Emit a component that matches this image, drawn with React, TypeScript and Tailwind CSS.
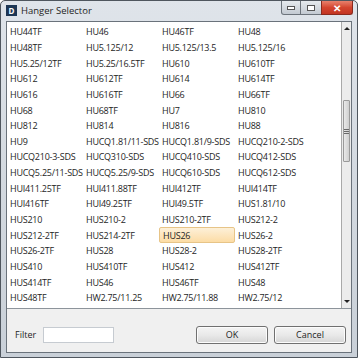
const hangers: string[] = [
  "HU44TF", "HU46", "HU46TF", "HU48",
  "HU48TF", "HU5.125/12", "HU5.125/13.5", "HU5.125/16",
  "HU5.25/12TF", "HU5.25/16.5TF", "HU610", "HU610TF",
  "HU612", "HU612TF", "HU614", "HU614TF",
  "HU616", "HU616TF", "HU66", "HU66TF",
  "HU68", "HU68TF", "HU7", "HU810",
  "HU812", "HU814", "HU816", "HU88",
  "HU9", "HUCQ1.81/11-SDS", "HUCQ1.81/9-SDS", "HUCQ210-2-SDS",
  "HUCQ210-3-SDS", "HUCQ310-SDS", "HUCQ410-SDS", "HUCQ412-SDS",
  "HUCQ5.25/11-SDS", "HUCQ5.25/9-SDS", "HUCQ610-SDS", "HUCQ612-SDS",
  "HUI411.25TF", "HUI411.88TF", "HUI412TF", "HUI414TF",
  "HUI416TF", "HUI49.25TF", "HUI49.5TF", "HUS1.81/10",
  "HUS210", "HUS210-2", "HUS210-2TF", "HUS212-2",
  "HUS212-2TF", "HUS214-2TF", "HUS26", "HUS26-2",
  "HUS26-2TF", "HUS28", "HUS28-2", "HUS28-2TF",
  "HUS410", "HUS410TF", "HUS412", "HUS412TF",
  "HUS414TF", "HUS46", "HUS46TF", "HUS48",
  "HUS48TF", "HW2.75/11.25", "HW2.75/11.88", "HW2.75/12",
];

const selected = "HUS26";

const Scrollbar = () => (
  <div className="w-[10px] flex flex-col border-l border-[#a9a9a9] bg-[#ececec]">
    <div className="h-[13px] flex items-center justify-center">
      <div className="w-0 h-0 border-x-[3px] border-x-transparent border-b-[3px] border-b-[#222]" />
    </div>
    <div className="h-[65px]" />
    <div className="h-[62px] mx-[1px] rounded-[1px] border border-[#9a9a9a] bg-gradient-to-r from-[#e9e9e9] to-[#cfcfcf] flex flex-col items-center justify-center gap-[1px]">
      <div className="w-[5px] h-px bg-[#6a6a6a]" />
      <div className="w-[5px] h-px bg-[#6a6a6a]" />
      <div className="w-[5px] h-px bg-[#6a6a6a]" />
    </div>
    <div className="flex-1" />
    <div className="h-[13px] flex items-center justify-center">
      <div className="w-0 h-0 border-x-[3px] border-x-transparent border-t-[3px] border-t-[#222]" />
    </div>
  </div>
);

const WinButton = ({ label }: { label: string }) => (
  <button className="w-[72px] h-[18px] rounded-[3px] border border-[#707070] bg-gradient-to-b from-[#f4f4f4] via-[#e9e9e9] to-[#d5d5d5] text-[9px] text-[#1e1e1e] flex items-center justify-center shadow-[inset_0_0_0_1px_#fcfcfc]">
    {label}
  </button>
);

export default function App() {
  return (
    <div className="w-[358px] h-[358px] flex flex-col rounded-t-[5px] border border-[#4f565e] bg-gradient-to-b from-[#dfe4ea] via-[#d3d9e0] to-[#c9d0d8] font-['Open_Sans',sans-serif] text-[#1e1e1e] overflow-hidden">
      <div className="h-[20px] flex items-start shrink-0">
        <div className="flex items-center h-[19px] pl-[5px]">
          <div className="w-[11px] h-[11px] bg-[#1d3654] text-white text-[8px] font-bold leading-none flex items-center justify-center">
            D
          </div>
          <span className="ml-[4px] text-[9.5px] text-[#1e1e1e] leading-none">Hanger Selector</span>
        </div>
        <div className="ml-auto mr-[4px] flex h-[14px]">
          <div className="w-[20px] rounded-bl-[3px] border border-t-0 border-[#6c737b] bg-gradient-to-b from-[#e6eaee] to-[#c3cad2] flex items-center justify-center">
            <div className="w-[6px] h-[2px] bg-white border border-[#555] box-content" />
          </div>
          <div className="w-[20px] border-b border-[#6c737b] bg-gradient-to-b from-[#e6eaee] to-[#c3cad2] flex items-center justify-center">
            <div className="w-[6px] h-[4px] border border-[#555] bg-white box-content" />
          </div>
          <div className="w-[32px] rounded-br-[3px] border border-t-0 border-[#8a2a1e] bg-gradient-to-b from-[#e8806c] via-[#d4452f] to-[#c23522] flex items-center justify-center text-white text-[10px] font-bold leading-none">
            ✕
          </div>
        </div>
      </div>

      <div className="flex-1 flex flex-col px-[5px] pb-[4px]">
        <div className="flex-1 flex flex-col border border-[#6a727b] bg-[#f0f0f0]">
          <div className="h-[287px] flex bg-white border-b border-[#8d949b]">
            <div className="w-[304px] grid grid-cols-4 content-start pt-[2px]">
              {hangers.map((h) => (
                <div
                  key={h}
                  className={`h-[15.65px] flex items-center pl-[3px] text-[9px] tracking-[-0.25px] whitespace-nowrap leading-none ${
                    h === selected
                      ? "rounded-[2px] border border-[#e7c487] bg-gradient-to-b from-[#fdf0d8] to-[#fcdca5] pl-[2px]"
                      : ""
                  }`}
                >
                  {h}
                </div>
              ))}
            </div>
            <div className="flex-1" />
            <Scrollbar />
          </div>

          <div className="flex-1 flex items-center pt-[8px] pl-[8px] pr-[5px]">
            <span className="text-[9px]">Filter</span>
            <div className="ml-[7px] w-[71px] h-[16px] bg-white border border-[#c6cbd1]" />
            <div className="ml-auto flex gap-[6px]">
              <WinButton label="OK" />
              <WinButton label="Cancel" />
            </div>
          </div>
        </div>
      </div>
    </div>
  );
}
